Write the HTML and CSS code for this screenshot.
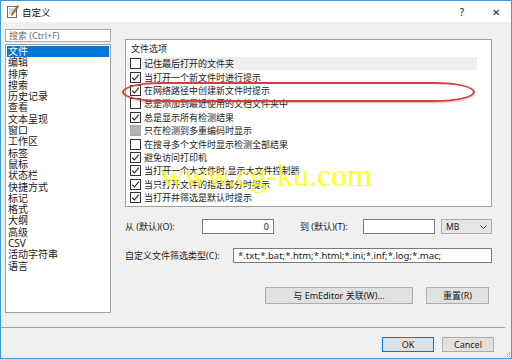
FILE: index.html
```html
<!DOCTYPE html>
<html lang="zh-CN">
<head>
    <meta charset="UTF-8">
    <title>自定义</title>
    <link rel="stylesheet" href="styles.css">
</head>
<body>
    <div class="window">
        <div class="titlebar">
            <svg class="app-icon" width="12" height="13" viewBox="0 0 12 13">
                <rect x="0.5" y="1.5" width="9" height="11" fill="#fff" stroke="#6b6b6b"/>
                <path d="M2 4h5M2 6h5M2 8h4" stroke="#b0b0b0"/>
                <path d="M10.5 0.5 L5 8.5 L4.6 10.4 L6.2 9.3 L11.6 1.4 Z" fill="#e0a020" stroke="#5a3c10" stroke-width="0.7"/>
            </svg>
            <span class="title">自定义</span>
            <span class="caption-btn help">?</span>
            <span class="caption-btn close">✕</span>
        </div>

        <div class="main">
            <!-- category list -->
            <div class="sidebar">
                <div class="search">搜索 (Ctrl+F)</div>
                <ul class="nav">
                    <li class="selected">文件</li>
                    <li>编辑</li>
                    <li>排序</li>
                    <li>搜索</li>
                    <li>历史记录</li>
                    <li>查看</li>
                    <li>文本呈现</li>
                    <li>窗口</li>
                    <li>工作区</li>
                    <li>标签</li>
                    <li>鼠标</li>
                    <li>状态栏</li>
                    <li>快捷方式</li>
                    <li>标记</li>
                    <li>格式</li>
                    <li>大纲</li>
                    <li>高级</li>
                    <li>CSV</li>
                    <li>活动字符串</li>
                    <li>语言</li>
                </ul>
            </div>

            <!-- file options page -->
            <div class="page">
                <div class="options">
                    <div class="group-title">文件选项</div>
                    <div class="option hover"><span class="box"></span>记住最后打开的文件夹</div>
                    <div class="option"><span class="box checked"></span>当打开一个新文件时进行提示</div>
                    <div class="option"><span class="box checked"></span>在网络路径中创建新文件时提示</div>
                    <div class="option"><span class="box"></span>总是添加到最近使用的文档文件夹中</div>
                    <div class="option"><span class="box checked"></span>总是显示所有检测结果</div>
                    <div class="option"><span class="box mixed"></span>只在检测到多重编码时显示</div>
                    <div class="option"><span class="box"></span>在搜寻多个文件时显示检测全部结果</div>
                    <div class="option"><span class="box checked"></span>避免访问打印机</div>
                    <div class="option"><span class="box checked"></span>当打开一个大文件时,显示大文件控制器</div>
                    <div class="option"><span class="box checked"></span>当只打开文件的指定部分时提示</div>
                    <div class="option"><span class="box checked"></span>当打开并筛选是默认时提示</div>
                </div>

                <div class="range">
                    <label class="from-label">从 (默认)(O):</label>
                    <div class="field num">0</div>
                    <label class="to-label">到 (默认)(T):</label>
                    <div class="field num"></div>
                    <div class="combo">MB
                        <svg width="7" height="4" viewBox="0 0 7 4"><path d="M0.5 0.5 L3.5 3.5 L6.5 0.5" fill="none" stroke="#333"/></svg>
                    </div>
                </div>

                <div class="filter">
                    <label class="filter-label">自定义文件筛选类型(C):</label>
                    <div class="field wide">*.txt;*.bat;*.htm;*.html;*.ini;*.inf;*.log;*.mac;</div>
                </div>

                <div class="actions">
                    <button class="btn assoc">与 EmEditor 关联(W)...</button>
                    <button class="btn reset">重置(R)</button>
                </div>
            </div>
        </div>

        <div class="footer">
            <button class="btn default">OK</button>
            <button class="btn">Cancel</button>
        </div>

        <svg class="grip" width="6" height="6" viewBox="0 0 6 6">
            <path d="M5 1h1v1h-1zM3 3h1v1h-1zM5 3h1v1h-1zM1 5h1v1h-1zM3 5h1v1h-1zM5 5h1v1h-1z" fill="#a0a0a0"/>
        </svg>

        <!-- markup drawn over the screenshot -->
        <div class="highlight"></div>
        <div class="watermark">www.cg-ku.com</div>
    </div>
</body>
</html>
```

FILE: styles.css
```css
body {
    margin: 0;
    font-family: "Noto Sans", "Noto Sans CJK SC", sans-serif;
    font-size: 9px;
    color: #1a1a1a;
}

.window {
    position: relative;
    width: 512px;
    height: 359px;
    box-sizing: border-box;
    border: 1px solid #3d9be0;
    background: #f0f0f0;
    display: flex;
    flex-direction: column;
    overflow: hidden;
}

.titlebar {
    height: 21px;
    background: #fff;
    display: flex;
    align-items: center;
    padding-left: 6px;
    flex-shrink: 0;
}

.title {
    margin-left: 3px;
    font-size: 9.5px;
    color: #111;
}

.caption-btn {
    font-size: 10px;
    color: #222;
}

.help {
    margin-left: auto;
}

.close {
    margin-left: 28px;
    margin-right: 11px;
    font-size: 10px;
}

.main {
    display: flex;
    height: 291px;
    padding: 7px 0 0 4px;
    box-sizing: border-box;
}

.sidebar {
    width: 106px;
    display: flex;
    flex-direction: column;
}

.search {
    height: 13px;
    box-sizing: border-box;
    border: 1px solid #a9a9a9;
    background: #fff;
    color: #6d6d6d;
    padding-left: 3px;
    line-height: 11px;
    font-size: 9px;
}

.nav {
    list-style: none;
    margin: 2px 0 0;
    padding: 1px;
    flex: 1;
    border: 1px solid #a0a0a0;
    background: #fff;
    font-size: 10px;
}

.nav li {
    line-height: 11.3px;
    height: 11.3px;
    padding-left: 1px;
    color: #1a1a1a;
}

.nav li.selected {
    background: #0078d7;
    color: #fff;
}

.page {
    margin-left: 14px;
    width: 367px;
    display: flex;
    flex-direction: column;
}

.options {
    margin-top: 10px;
    height: 168px;
    box-sizing: border-box;
    border: 1px solid #a0a0a0;
    background: #fff;
    padding: 0 14px 0 1px;
}

.group-title {
    height: 17px;
    line-height: 17px;
    padding-left: 4px;
}

.option {
    height: 13.4px;
    display: flex;
    align-items: center;
    padding-left: 3px;
}

.option.hover {
    background: #efefef;
}

.box {
    width: 11px;
    height: 11px;
    box-sizing: border-box;
    border: 1px solid #333;
    background: #fff;
    margin-right: 3px;
    flex-shrink: 0;
}

.box.checked {
    background: #fff url("data:image/svg+xml,%3Csvg xmlns='http://www.w3.org/2000/svg' width='9' height='9'%3E%3Cpath d='M1.2 4.6 L3.5 7 L7.8 1.6' fill='none' stroke='%23222' stroke-width='1.1'/%3E%3C/svg%3E") no-repeat center;
}

.box.mixed {
    border-color: #a8a8a8;
    background: #b4b4b4;
}

.range,
.filter {
    display: flex;
    align-items: center;
    height: 15px;
}

.range {
    margin-top: 12px;
}

.filter {
    margin-top: 14px;
}

.from-label {
    width: 77px;
}

.to-label {
    width: 63px;
    margin-left: 26px;
}

.filter-label {
    width: 108px;
}

.field {
    height: 15px;
    box-sizing: border-box;
    border: 1px solid #7a7a7a;
    background: #fff;
    line-height: 13px;
    padding: 0 4px;
}

.field.num {
    width: 72px;
    text-align: right;
}

.field.wide {
    flex: 1;
    font-size: 9.5px;
    white-space: nowrap;
    overflow: hidden;
}

.combo {
    margin-left: 6px;
    width: 51px;
    height: 15px;
    box-sizing: border-box;
    border: 1px solid #adadad;
    background: #e5e5e5;
    display: flex;
    align-items: center;
    justify-content: space-between;
    padding: 0 4px;
    font-size: 8.5px;
}

.actions {
    margin-top: 24px;
    display: flex;
    justify-content: flex-end;
    gap: 13px;
    padding-right: 3px;
}

.btn {
    height: 17px;
    box-sizing: border-box;
    border: 1px solid #adadad;
    background: #e1e1e1;
    font-family: inherit;
    font-size: 9px;
    color: #1a1a1a;
    padding: 0;
}

.btn.assoc {
    width: 148px;
}

.btn.reset {
    width: 63px;
}

.footer {
    margin: 14px 6px 0 0;
    border-top: 1px solid #a0a0a0;
    padding: 9px 11px 0 0;
    display: flex;
    justify-content: flex-end;
    gap: 8px;
}

.footer .btn {
    width: 52px;
    height: 15px;
}

.footer .btn.default {
    border-color: #0078d7;
}

.grip {
    position: absolute;
    right: 1px;
    bottom: 1px;
}

.highlight {
    position: absolute;
    left: 121px;
    top: 81px;
    width: 353px;
    height: 20px;
    box-sizing: border-box;
    border: 2px solid #d4413d;
    border-radius: 40px / 10px;
    box-shadow: 0 1px 2px rgba(150, 40, 40, 0.35);
}

.watermark {
    position: absolute;
    right: 139px;
    top: 156px;
    font-family: "Liberation Serif", serif;
    font-size: 32px;
    color: rgba(255, 255, 0, 0.85);
    white-space: nowrap;
}
```
